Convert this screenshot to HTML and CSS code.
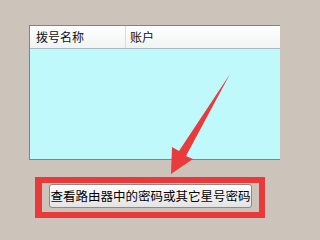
FILE: index.html
```html
<!DOCTYPE html>
<html>
<head>
<meta charset="utf-8">
<link rel="stylesheet" href="styles.css">
</head>
<body>
<div class="panel">
  <div class="head">
    <div class="col c1">拨号名称</div>
    <div class="col c2">账户</div>
  </div>
  <div class="list"></div>
</div>
<div class="frame">
  <div class="btn">查看路由器中的密码或其它星号密码</div>
</div>
<svg class="arrow" width="280" height="214" viewBox="0 0 280 214">
  <polygon points="171,174 172,147 179,151 230,74 186,156 193,159" fill="#e93b3b"/>
</svg>
</body>
</html>
```
FILE: styles.css
```css
html {
  overflow: hidden;
  background: #ccc4ba;
}
body {
  margin: 0;
  padding: 0;
  background: #ccc4ba;
  font-family: "Noto Sans CJK SC", "Noto Sans", sans-serif;
  position: relative;
}
.panel {
  margin: 25px 0 0 29px;
  width: 250px;
  height: 133px;
  border: 1px solid #6f8a96;
  border-right: none;
  display: flex;
  flex-direction: column;
}
.head {
  height: 22px;
  display: flex;
  background: linear-gradient(#ffffff, #f1f3f4);
  border-bottom: 1px solid #a9bcc6;
}
.col {
  font-size: 12px;
  line-height: 22px;
  color: #111;
}
.c1 {
  width: 89px;
  padding-left: 6px;
  border-right: 1px solid #d8dcdf;
}
.c2 {
  padding-left: 4px;
}
.list {
  flex: 1;
  background: #bff9fb;
}
.frame {
  margin: 17px 0 0 35px;
  width: 203px;
  border: 6px solid #e83a3a;
  border-left-width: 7px;
  padding: 1px 7px 4px 7px;
  background: #ccc4ba;
}
.btn {
  height: 22px;
  border: 1px solid #8b8b8b;
  border-radius: 3px;
  background: linear-gradient(#fdfdfd, #e4e4e4);
  font-size: 12.5px;
  line-height: 22px;
  text-align: center;
  color: #000;
  white-space: nowrap;
}
.arrow {
  position: absolute;
  left: 0;
  top: 0;
}
```
